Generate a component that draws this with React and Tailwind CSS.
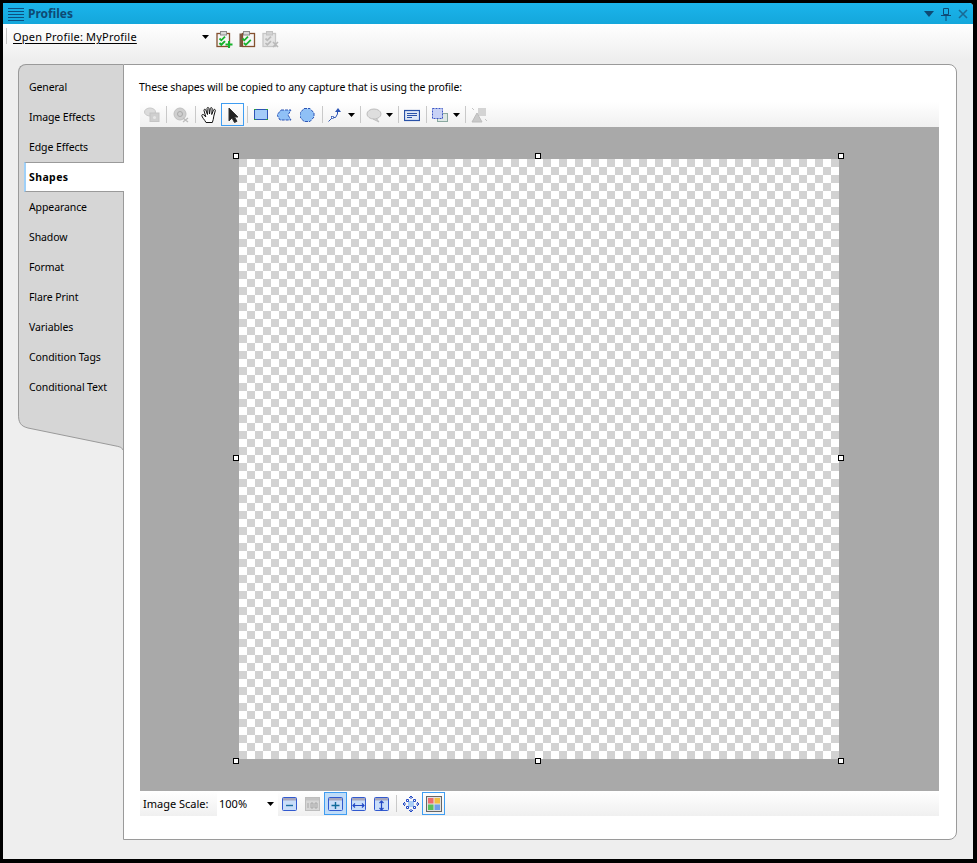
const F = "[font-family:'Noto_Sans',sans-serif]";

const Sep = ({ w = "w-[6px]" }) => (
  <div className={`${w} h-full flex items-center justify-center`}>
    <div className="w-px h-[17px] bg-[#c9c9c9]" />
  </div>
);

const Arrow = ({ cls = "" }) => (
  <svg width="7" height="4" viewBox="0 0 7 4" className={cls}><path d="M0 0h7L3.5 4z" fill="#000" /></svg>
);

const Btn = ({ children, on, blue, w = "w-[23px]" }) => (
  <div className={`${w} h-[23px] shrink-0 flex items-center justify-center ${on ? "border border-[#3f9df2]" : ""} ${blue ? "bg-[#bfdcf8]" : ""}`}>
    {children}
  </div>
);

const I = ({ children, s = 16, vb = "0 0 16 16" }) => (
  <svg width={s} height={s} viewBox={vb} fill="none" className="shrink-0">{children}</svg>
);

const Clip = ({ variant }) => {
  const gray = variant === "off";
  const edge = gray ? "#c6c6c6" : "#84502e";
  const check = gray ? "#bcbcbc" : "#16b32c";
  return (
    <svg width="17" height="17" viewBox="0 0 17 17" fill="none" className="shrink-0">
      {variant === "two" && <rect x="0.5" y="2.5" width="15" height="13.5" fill="#7a5a44" />}
      <rect x={variant === "two" ? 3.5 : 1} y="2.5" width={variant === "two" ? 12 : 12.5} height="13" fill={gray ? "#e4e4e4" : "#f6f6f6"} stroke={edge} strokeWidth="1.3" />
      <rect x="4.5" y="0.5" width="6" height="3.5" fill={gray ? "#d2d2d2" : "#d9d9d9"} stroke={gray ? "#c2c2c2" : "#8a8a8a"} />
      <path d="M3.500 7.500l1.800 1.800 3.700-3.700" stroke={check} strokeWidth="1.800" />
      {variant === "two" && <path d="M5 12l1.800 1.800 5-5" stroke={check} strokeWidth="1.800" />}
      {variant === "add" && <path d="M3.500 12l1.800 1.800 3.700-3.700M9.500 13.500h7M13 10v7" stroke={check} strokeWidth="2" />}
      {variant === "off" && <path d="M3.500 12l1.800 1.800 3.700-3.700M11 11l5 5m0-5l-5 5" stroke="#b9b9b9" strokeWidth="1.600" />}
    </svg>
  );
};

const Handle = ({ cls }) => (
  <div className={`absolute w-[6px] h-[6px] bg-white border border-black ${cls}`} />
);

const TABS = ["General", "Image Effects", "Edge Effects", "Shapes", "Appearance", "Shadow", "Format", "Flare Print", "Variables", "Condition Tags", "Conditional Text"];

const Win = ({ children }) => (
  <svg width="16" height="16" viewBox="1 0 16 16" fill="none" className="shrink-0">
    <rect x="1.500" y="1.500" width="14" height="13" rx="1" fill="#c9def9" stroke="#3159cf" />
    <rect x="2" y="2" width="13" height="2.500" fill="#a6a6bb" />
    {children}
  </svg>
);

const Small = "text-[10.5px] tracking-[-0.1px]";

export default function App() {
  return (
    <div className={`w-[977px] h-[863px] bg-black pt-[3px] pl-[3px] pr-[4px] pb-[4px] text-[11px] leading-[13px] text-black ${F}`}>
      <div className="w-full h-full flex flex-col bg-[#eeeeee] rounded-tr-[4px] overflow-hidden">
        <div className="h-[21px] shrink-0 flex items-center bg-gradient-to-b from-[#1bb4ec] to-[#14a7db] pl-[5px] pr-[4px]">
          <svg width="16" height="14" viewBox="0 0 16 14" fill="none" stroke="#0d4f80">
            <path d="M0 1.500h16M0 4.500h16M0 7.500h16M0 10.500h16M0 13.500h16" />
          </svg>
          <span className="ml-[4px] text-[12px] font-bold text-[#0e4a74]">Profiles</span>
          <div className="ml-auto flex items-center gap-[5px]">
            <svg width="12" height="8" viewBox="0 0 12 8"><path d="M1 1h10L6 7z" fill="#0e4a74" /></svg>
            <svg width="12" height="14" viewBox="0 0 12 14" fill="none" stroke="#0e4a74"><path d="M3.500 1.500h5v6h-5zM1 8.500h10M6 8.500V14" /></svg>
            <svg width="12" height="12" viewBox="0 0 12 12" fill="none" stroke="#1a6a94" strokeWidth="1.600"><path d="M2 2l8 8M10 2l-8 8" /></svg>
          </div>
        </div>

        <div className="h-[36px] shrink-0 bg-gradient-to-b from-white to-[#eeeeee] pt-[4px] flex items-start pl-[3px]">
          <div className="w-px h-[16px] bg-[#c4c4c4]" />
          <span className="ml-[6px] mt-[2px] w-[189px] tracking-[0.2px] underline underline-offset-2">Open Profile: MyProfile</span>
          <Arrow cls="mt-[7px]" />
          <div className="ml-[4px] flex">
            <Btn><Clip variant="add" /></Btn>
            <Btn><Clip variant="two" /></Btn>
            <Btn><Clip variant="off" /></Btn>
          </div>
        </div>

        <div className="flex-1 flex pt-[4px] pl-[15px] pr-[16px] pb-[19px]">
          <div className="w-[105px] shrink-0 flex flex-col">
            <div className="h-[346px] bg-[#d6d6d6] border-l border-t border-[#9a9a9a] rounded-tl-[8px] pt-[7px] pl-[5px]">
              {TABS.map((t) =>
                t === "Shapes" ? (
                  <div key={t} className="relative z-10 h-[30px] w-[100px] flex items-center pl-[3px] font-bold text-[10.5px] tracking-[0.4px] bg-white border-y border-[#9a9a9a] border-l-2 border-l-[#9fd0f8]">
                    <span>{t}</span>
                  </div>
                ) : (
                  <div key={t} className={`h-[30px] flex items-center pl-[5px] ${Small}`}>
                    <span>{t}</span>
                  </div>
                )
              )}
            </div>
            <svg width="105" height="40" viewBox="0 0 105 40" className="block">
              <path d="M0 0V4C0 12 2 16 10 18L98 36C103 37 105 38 105 40V0Z" fill="#d6d6d6" />
              <path d="M.5 0V4C.5 12 2 16 10 18L98 36C103 37 104.500 38 104.500 40" fill="none" stroke="#9a9a9a" />
            </svg>
          </div>

          <div className="flex-1 bg-white border border-[#9a9a9a] rounded-r-[8px] pt-[16px] pl-[16px] pr-[17px] flex flex-col">
            <div className={`h-[21px] shrink-0 -ml-px ${Small}`}>These shapes will be copied to any capture that is using the profile:</div>

            <div className="h-[25px] shrink-0 flex items-center bg-gradient-to-b from-white to-[#f0f0f0]">
              <Btn><I><ellipse cx="6" cy="5" rx="5.500" ry="4" fill="#dcdcdc" stroke="#c8c8c8" /><rect x="6" y="6" width="9" height="8.500" fill="#cfcfcf" stroke="#c4c4c4" /><circle cx="10.500" cy="10.500" r="1.500" fill="#e6e6e6" /></I></Btn>
              <Sep />
              <Btn><I><circle cx="7" cy="7" r="6" fill="#cfcfcf" stroke="#c0c0c0" /><circle cx="7" cy="7" r="2.500" stroke="#aaa" /><path d="M10 11l5 4m0-4l-5 4" stroke="#bcbcbc" strokeWidth="1.300" /></I></Btn>
              <Sep />
              <Btn>
                <svg width="18" height="18" viewBox="0 0 18 18" fill="#fff" stroke="#111" className="shrink-0">
                  <path d="M5 16.500C3.500 13.500 1 11.500.8 9.500c0-1.200 1.500-1.300 2.200-.5L4.800 11 3 4.500c-.3-1.300 1.300-1.700 1.800-.5L6.500 8.500 6 2.500c-.1-1.300 1.800-1.400 1.900-.1L8.500 8 9.300 2.500c.2-1.300 2-1.100 1.900.2L10.700 8.500l1.800-4.500c.5-1.200 2.200-.6 1.800.6l-1.500 5.500c-.5 2.500-.5 4.500-1.500 6.400z" />
                </svg>
              </Btn>
              <Btn on><svg width="12" height="16" viewBox="0 0 12 16"><path d="M2 1v13l3-3 2.500 4.500 2.500-1.200L7.500 10H11z" fill="#222" stroke="#333" /></svg></Btn>
              <Sep />
              <Btn><I vb="1 0 16 16"><rect x="1.500" y="2.500" width="13" height="10" fill="#a4cbf8" stroke="#2d55b5" /><path d="M1 2.500h2M13 2.500h2M1 12.500h2M13 12.500h2" stroke="#2aa33a" /></I></Btn>
              <Btn><I vb="1 0 16 16"><path d="M5 3h10l-3 5 3 5H4L1 8z" fill="#8fc0f6" stroke="#2d55b5" strokeDasharray="3 1" /></I></Btn>
              <Btn><I vb="1 0 16 16"><path d="M5 1.500h6L15 6v4l-4 4.500H5L1 10V6z" fill="#8fc0f6" stroke="#2d55b5" strokeDasharray="3 1" /></I></Btn>
              <Sep />
              <Btn w="w-[20px]"><I><path d="M1.500 14.500l4-4h3l2-3.500V3" stroke="#2d55b5" /><path d="M8 5l3-4 3 4z" fill="#2d55b5" /><rect x="4.500" y="9.500" width="2" height="2" fill="#fff" stroke="#2d55b5" strokeWidth=".7" /></I></Btn>
              <div className="w-[12px] flex justify-center"><Arrow /></div>
              <Sep w="w-[7px]" />
              <Btn w="w-[20px]"><I><ellipse cx="8" cy="7" rx="7" ry="5" fill="#dedede" stroke="#bdbdbd" /><path d="M10 11l3 4-6-3" fill="#d0d0d0" stroke="#bdbdbd" /></I></Btn>
              <div className="w-[10px] flex justify-center"><Arrow /></div>
              <Sep w="w-[9px]" />
              <Btn w="w-[18px]"><I><rect x=".5" y="3.500" width="15" height="10" fill="#dfe8f6" stroke="#2a52a8" strokeWidth="1.200" /><path d="M3 6.500h10M3 8.500h10M3 10.500h5" stroke="#2a52a8" /></I></Btn>
              <Sep w="w-[11px]" />
              <Btn w="w-[16px]"><I><rect x="5.500" y="6.500" width="10" height="8" fill="#dde8e4" stroke="#8aa8a0" /><rect x=".5" y="1.500" width="10" height="10" fill="#c8d2f6" stroke="#3a55c5" strokeDasharray="2 1" /></I></Btn>
              <div className="w-[16px] flex justify-center"><Arrow /></div>
              <Sep w="w-[3px]" />
              <Btn><I><rect x="7" y="1" width="8" height="8" fill="#d4d4d4" /><path d="M6 6l5 9H1z" fill="#cacaca" stroke="#bcbcbc" /><path d="M1 1l2 2M14 12l2 2" stroke="#c4c4c4" /></I></Btn>
            </div>

            <div className="relative h-[664px] shrink-0 bg-[#a9a9a9] flex items-center justify-center">
              <div className="w-[600px] h-[600px] -translate-x-px bg-[repeating-conic-gradient(#ffffff_0_25%,#d2d2d2_0_50%)] bg-[length:16px_16px]" />
              <Handle cls="left-[93px] top-[26px]" />
              <Handle cls="left-[395px] top-[26px]" />
              <Handle cls="left-[698px] top-[26px]" />
              <Handle cls="left-[93px] top-[328px]" />
              <Handle cls="left-[698px] top-[328px]" />
              <Handle cls="left-[93px] top-[631px]" />
              <Handle cls="left-[395px] top-[631px]" />
              <Handle cls="left-[698px] top-[631px]" />
            </div>

            <div className="h-[25px] shrink-0 flex items-center bg-gradient-to-b from-white to-[#f0f0f0]">
              <span className="ml-[3px] w-[74px]">Image Scale:</span>
              <div className="w-[61px] h-[24px] bg-white flex items-center pl-[2px]">
                100%
                <Arrow cls="ml-auto mr-[4px]" />
              </div>
              <Btn><Win><path d="M5 9.500h7" stroke="#1f6f9f" strokeWidth="1.400" /></Win></Btn>
              <Btn><svg width="16" height="16" viewBox="1 0 16 16" fill="none" className="shrink-0"><rect x="1.500" y="1.500" width="14" height="13" fill="#d6d6d6" stroke="#bdbdbd" /><rect x="2" y="2" width="13" height="2.500" fill="#c4c4c4" /><path d="M4 7v5M7 7h2v5H7zM11 7h2v5h-2z" stroke="#a8a8a8" /></svg></Btn>
              <Btn on blue><Win><path d="M4.500 9.500h8M8.500 6v7" stroke="#0f6a9a" strokeWidth="1.400" /></Win></Btn>
              <Btn><Win><path d="M3 9.500h11M5 7.500l-2 2 2 2M12 7.500l2 2-2 2" stroke="#2249c4" strokeWidth="1.200" /></Win></Btn>
              <Btn><Win><path d="M8.500 5v9M6.500 7l2-2 2 2M6.500 12l2 2 2-2" stroke="#2249c4" strokeWidth="1.200" /></Win></Btn>
              <Sep />
              <Btn>
                <I>
                  <rect x="5" y="5" width="6" height="6" fill="#a9cdf6" />
                  <path d="M8 0v3M6 2l2-2 2 2M8 13v3M6 14l2 2 2-2M0 8h3M2 6L0 8l2 2M13 8h3M14 6l2 2-2 2" stroke="#2249c4" />
                  <path d="M3.500 3.500h2v2h-2zM10.500 3.500h2v2h-2zM3.500 10.500h2v2h-2zM10.500 10.500h2v2h-2z" stroke="#2249c4" fill="#fff" />
                </I>
              </Btn>
              <Btn on><svg width="16" height="16" viewBox="0 0 16 16" className="shrink-0"><rect x=".5" y=".5" width="15" height="15" fill="#e2e2e2" stroke="#666" /><rect x="2" y="2" width="5.500" height="5.500" fill="#ee6b6b" /><rect x="8.500" y="2" width="5.500" height="5.500" fill="#f0bd42" /><rect x="2" y="8.500" width="5.500" height="5.500" fill="#5bbf5b" /><rect x="8.500" y="8.500" width="5.500" height="5.500" fill="#6f9fe8" /></svg></Btn>
            </div>
          </div>
        </div>
      </div>
    </div>
  );
}
